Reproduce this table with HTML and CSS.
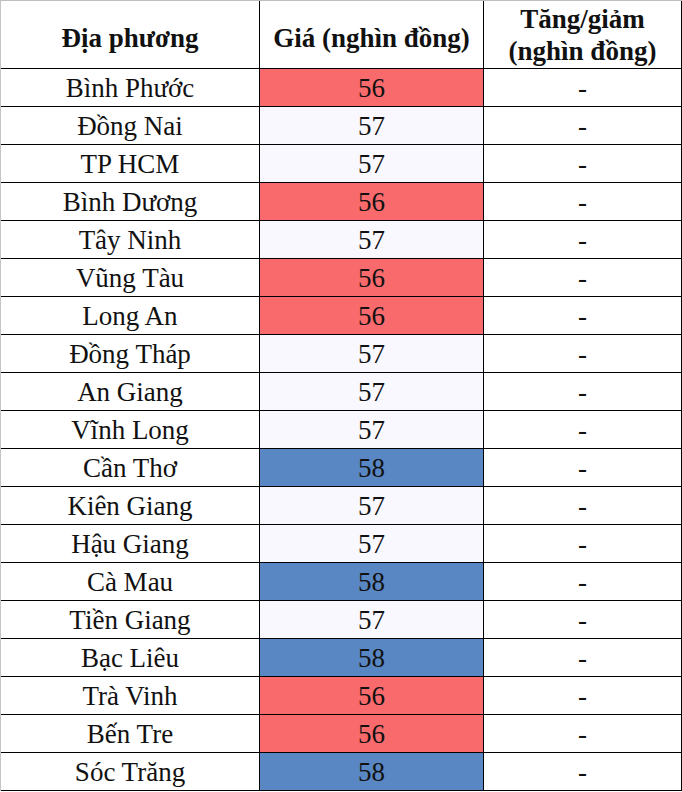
FILE: index.html
```html
<!DOCTYPE html>
<html>
<head>
<meta charset="utf-8">
<title>Giá heo hơi</title>
<link rel="stylesheet" href="styles.css">
</head>
<body>
<table class="price-table">
  <colgroup>
    <col class="c1"><col class="c2"><col class="c3">
  </colgroup>
  <thead>
    <tr class="head">
      <th class="single">Địa phương</th>
      <th class="single">Giá (nghìn đồng)</th>
      <th>Tăng/giảm<br>(nghìn đồng)</th>
    </tr>
  </thead>
  <tbody>
    <tr><td>Bình Phước</td><td class="red">56</td><td>-</td></tr>
    <tr><td>Đồng Nai</td><td class="pale">57</td><td>-</td></tr>
    <tr><td>TP HCM</td><td class="pale">57</td><td>-</td></tr>
    <tr><td>Bình Dương</td><td class="red">56</td><td>-</td></tr>
    <tr><td>Tây Ninh</td><td class="pale">57</td><td>-</td></tr>
    <tr><td>Vũng Tàu</td><td class="red">56</td><td>-</td></tr>
    <tr><td>Long An</td><td class="red">56</td><td>-</td></tr>
    <tr><td>Đồng Tháp</td><td class="pale">57</td><td>-</td></tr>
    <tr><td>An Giang</td><td class="pale">57</td><td>-</td></tr>
    <tr><td>Vĩnh Long</td><td class="pale">57</td><td>-</td></tr>
    <tr><td>Cần Thơ</td><td class="blue">58</td><td>-</td></tr>
    <tr><td>Kiên Giang</td><td class="pale">57</td><td>-</td></tr>
    <tr><td>Hậu Giang</td><td class="pale">57</td><td>-</td></tr>
    <tr><td>Cà Mau</td><td class="blue">58</td><td>-</td></tr>
    <tr><td>Tiền Giang</td><td class="pale">57</td><td>-</td></tr>
    <tr><td>Bạc Liêu</td><td class="blue">58</td><td>-</td></tr>
    <tr><td>Trà Vinh</td><td class="red">56</td><td>-</td></tr>
    <tr><td>Bến Tre</td><td class="red">56</td><td>-</td></tr>
    <tr><td>Sóc Trăng</td><td class="blue">58</td><td>-</td></tr>
  </tbody>
</table>
</body>
</html>
```

FILE: styles.css
```css
html, body {
  margin: 0;
  padding: 0;
  background: #ffffff;
}

.price-table {
  width: 682px;
  table-layout: fixed;
  border-collapse: separate;
  border-spacing: 0;
  border-top: 1px solid #bdbdbd;
  border-left: 1px solid #c4c4c4;
  font-family: "Liberation Serif", serif;
  color: #111111;
}

.c1 { width: 259px; }
.c2 { width: 224px; }
.c3 { width: 198px; }

.price-table th,
.price-table td {
  padding: 0;
  text-align: center;
  vertical-align: middle;
  font-family: "Liberation Serif", serif;
  border-right: 1px solid #000000;
  border-bottom: 1px solid #000000;
}

.head {
  height: 68px;
}

.head th {
  font-weight: bold;
  font-size: 27px;
  line-height: 32px;
}

.head th.single {
  padding-top: 6px;
}

.price-table tbody tr {
  height: 38px;
}

.price-table td {
  font-size: 27px;
  line-height: 30px;
}

.red { background: #f96a6c; }
.blue { background: #5987c4; }
.pale { background: #f9f8fe; }
```
